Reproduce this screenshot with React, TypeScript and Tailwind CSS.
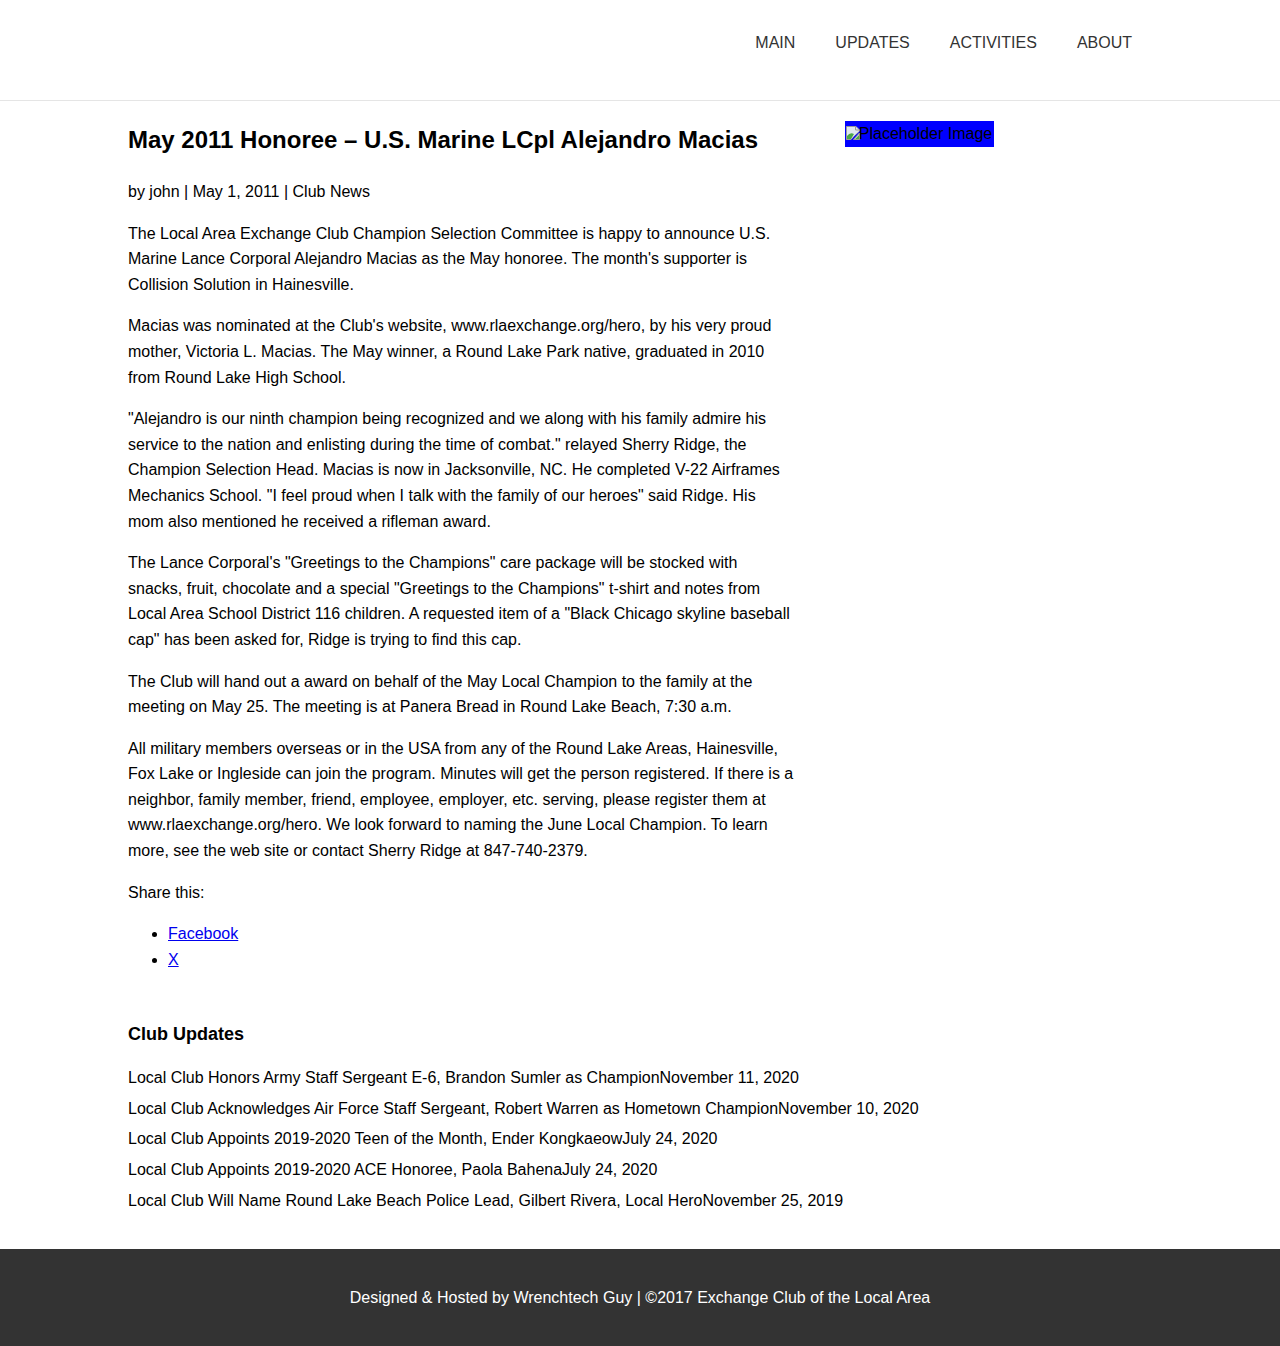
import React from "react";

const paragraphs = [
  "The Local Area Exchange Club Champion Selection Committee is happy to announce U.S. Marine Lance Corporal Alejandro Macias as the May honoree. The month's supporter is Collision Solution in Hainesville.",
  "Macias was nominated at the Club's website, www.rlaexchange.org/hero, by his very proud mother, Victoria L. Macias. The May winner, a Round Lake Park native, graduated in 2010 from Round Lake High School.",
  "\"Alejandro is our ninth champion being recognized and we along with his family admire his service to the nation and enlisting during the time of combat.\" relayed Sherry Ridge, the Champion Selection Head. Macias is now in Jacksonville, NC. He completed V-22 Airframes Mechanics School. \"I feel proud when I talk with the family of our heroes\" said Ridge. His mom also mentioned he received a rifleman award.",
  "The Lance Corporal's \"Greetings to the Champions\" care package will be stocked with snacks, fruit, chocolate and a special \"Greetings to the Champions\" t-shirt and notes from Local Area School District 116 children. A requested item of a \"Black Chicago skyline baseball cap\" has been asked for, Ridge is trying to find this cap.",
  "The Club will hand out a award on behalf of the May Local Champion to the family at the meeting on May 25. The meeting is at Panera Bread in Round Lake Beach, 7:30 a.m.",
  "All military members overseas or in the USA from any of the Round Lake Areas, Hainesville, Fox Lake or Ingleside can join the program. Minutes will get the person registered. If there is a neighbor, family member, friend, employee, employer, etc. serving, please register them at www.rlaexchange.org/hero. We look forward to naming the June Local Champion. To learn more, see the web site or contact Sherry Ridge at 847-740-2379.",
];

const updates = [
  ["Local Club Honors Army Staff Sergeant E-6, Brandon Sumler as Champion", "November 11, 2020"],
  ["Local Club Acknowledges Air Force Staff Sergeant, Robert Warren as Hometown Champion", "November 10, 2020"],
  ["Local Club Appoints 2019-2020 Teen of the Month, Ender Kongkaeow", "July 24, 2020"],
  ["Local Club Appoints 2019-2020 ACE Honoree, Paola Bahena", "July 24, 2020"],
  ["Local Club Will Name Round Lake Beach Police Lead, Gilbert Rivera, Local Hero", "November 25, 2019"],
];

function BrokenImageIcon() {
  return (
    <svg width="16" height="16" viewBox="0 0 16 16" className="absolute left-0 top-[4px]">
      <path d="M1.5 1.5 H11 L14.5 5 V6 L9 11 L6 14.5 H1.5 Z" fill="#ffffff" stroke="#9a9a9a" />
      <path d="M2 2 H10.5 L14 5.5 V6 L9 11 L6 14 H2 Z" fill="#dfe8f0" />
      <path d="M2 11 Q5 7 9 9 L6 14 H2 Z" fill="#4aa84a" />
      <path d="M10.5 1.5 V5 H14.5" fill="none" stroke="#9a9a9a" />
      <path d="M14.5 8 V14.5 H8.5 Z" fill="#ffffff" stroke="#9a9a9a" />
      <path d="M14 10 L10 14 H14 Z" fill="#4aa84a" />
    </svg>
  );
}

export default function App() {
  return (
    <div className="min-h-[1346px] flex flex-col bg-white text-black font-['Liberation_Sans',Arial,sans-serif] text-[16px]">
      <header className="h-[101px] border-b border-[#e5e5e5]">
        <div className="w-[1024px] mx-auto flex justify-end pt-[30px]">
          <nav className="flex">
            {["MAIN", "UPDATES", "ACTIVITIES", "ABOUT"].map((n) => (
              <a key={n} className="px-[20px] leading-[25.6px] text-[#333333]">
                {n}
              </a>
            ))}
          </nav>
        </div>
      </header>

      <main className="w-[1024px] mx-auto pt-[20px] flex-1">
        <div className="flex">
          <article className="w-[65%]">
            <h1 className="text-[24px] font-bold leading-[38px] mb-[20px]">
              May 2011 Honoree – U.S. Marine LCpl Alejandro Macias
            </h1>
            <p className="leading-[25.6px] mb-4">by john | May 1, 2011 | Club News</p>
            {paragraphs.map((p, i) => (
              <p key={i} className="leading-[25.6px] mb-4">
                {p}
              </p>
            ))}
            <p className="leading-[25.6px] mb-4">Share this:</p>
            <ul className="list-disc pl-[40px] mb-4 leading-[25.6px]">
              <li>
                <a className="text-[#0000ee] underline">Facebook</a>
              </li>
              <li>
                <a className="text-[#0000ee] underline">X</a>
              </li>
            </ul>
          </article>
          <aside className="w-[30%] ml-[5%]">
            <div className="relative w-[149px] h-[26px] bg-[#0000ff]">
              <BrokenImageIcon />
              <span className="absolute left-[14px] top-0 leading-[26px] whitespace-nowrap text-black">
                Placeholder Image
              </span>
            </div>
          </aside>
        </div>

        <section>
          <h3 className="text-[18px] font-bold leading-[28.8px] mt-[32px] mb-[16px]">Club Updates</h3>
          <ul>
            {updates.map(([t, d], i) => (
              <li key={i} className="leading-[25.6px] mb-[5px]">
                <span>{t}</span>
                <span>{d}</span>
              </li>
            ))}
          </ul>
        </section>
      </main>

      <footer className="h-[97px] bg-[#333333] flex items-center justify-center mt-[30px]">
        <p className="text-white leading-[25.6px]">
          Designed &amp; Hosted by Wrenchtech Guy | ©2017 Exchange Club of the Local Area
        </p>
      </footer>
    </div>
  );
}
